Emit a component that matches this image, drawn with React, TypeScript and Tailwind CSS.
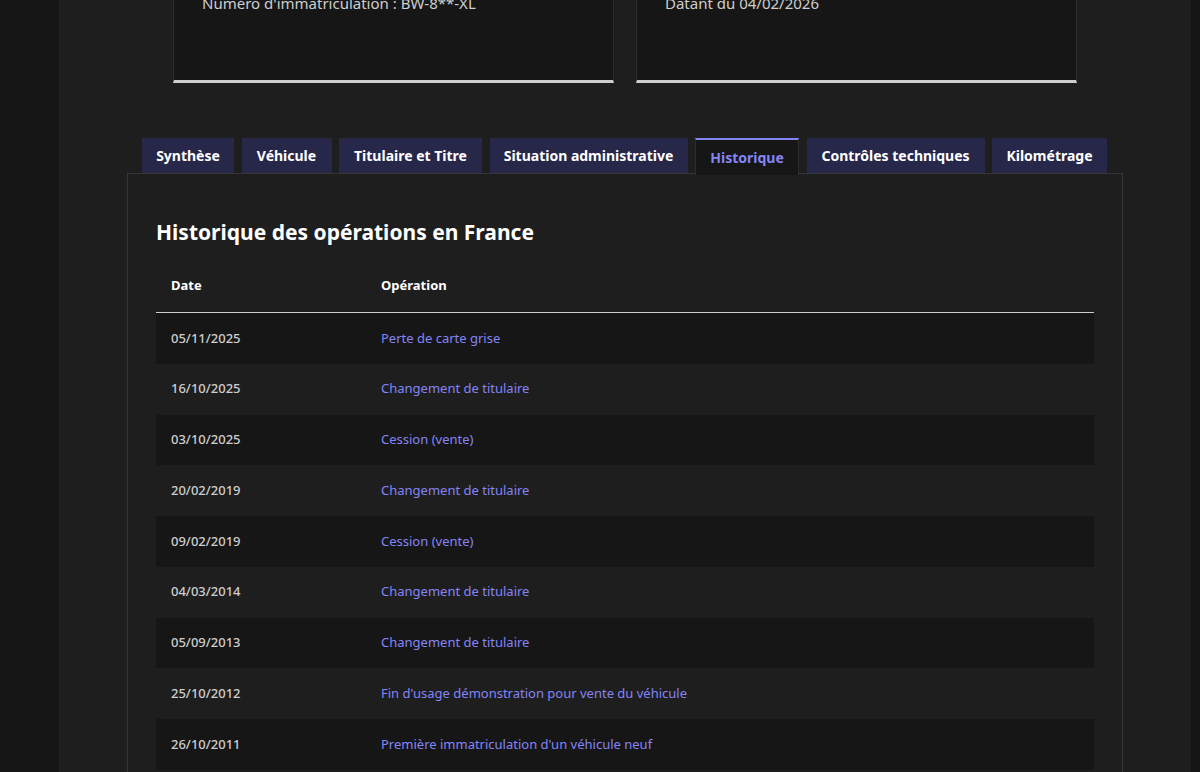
const tabs = [
  { label: 'Synthèse', width: 'w-[92px]' },
  { label: 'Véhicule', width: 'w-[90px]' },
  { label: 'Titulaire et Titre', width: 'w-[143px]' },
  { label: 'Situation administrative', width: 'w-[198px]' },
  { label: 'Historique', width: 'w-[104px]' },
  { label: 'Contrôles techniques', width: 'w-[178px]' },
  { label: 'Kilométrage', width: 'w-[115px]' },
]

const operations = [
  { date: '05/11/2025', label: 'Perte de carte grise' },
  { date: '16/10/2025', label: 'Changement de titulaire' },
  { date: '03/10/2025', label: 'Cession (vente)' },
  { date: '20/02/2019', label: 'Changement de titulaire' },
  { date: '09/02/2019', label: 'Cession (vente)' },
  { date: '04/03/2014', label: 'Changement de titulaire' },
  { date: '05/09/2013', label: 'Changement de titulaire' },
  { date: '25/10/2012', label: "Fin d'usage démonstration pour vente du véhicule" },
  { date: '26/10/2011', label: "Première immatriculation d'un véhicule neuf" },
]

// the page is scrolled: only the last line of each card still shows
function InfoCard({ line }: { line: string }) {
  return (
    <div className="flex h-[143px] flex-col justify-end border border-b-[3px] border-[#2c2c2c] border-b-[#cecece] bg-[#161616] px-7 pb-[65px]">
      <p className="text-[15px] leading-6 text-[#cecece]">{line}</p>
    </div>
  )
}

export default function App() {
  const active = 'Historique'

  return (
    <div
      className="h-[772px] overflow-hidden bg-[#161616]"
      style={{ fontFamily: '"Noto Sans", "Liberation Sans", sans-serif' }}
    >
      <div className="ml-[59px] h-[900px] w-[1132px] bg-[#1e1e1e]">
        <div className="-mt-[60px] grid grid-cols-2 gap-[22px] px-[114px]">
          <InfoCard line="Numéro d'immatriculation : BW-8**-XL" />
          <InfoCard line="Datant du 04/02/2026" />
        </div>

        <div className="mt-[55px] px-[68px]">
          <div className="flex gap-[7.5px] px-[15px]">
            {tabs.map((tab) =>
              tab.label === active ? (
                <div
                  key={tab.label}
                  className={`relative z-10 flex h-[37px] shrink-0 justify-center whitespace-nowrap border-x border-t-2 border-x-[#2c2c2c] border-t-[#8585f6] bg-[#161616] pt-[7px] text-[14px] font-bold text-[#8585f6] ${tab.width}`}
                >
                  {tab.label}
                </div>
              ) : (
                <div
                  key={tab.label}
                  className={`flex h-[35px] shrink-0 items-center justify-center whitespace-nowrap bg-[#27274a] text-[14px] font-bold text-white ${tab.width}`}
                >
                  {tab.label}
                </div>
              )
            )}
          </div>

          <div className="-mt-[2px] h-[640px] border border-[#353535] bg-[#1e1e1e] px-7 pt-[44px]">
            <h2 className="text-[21px] font-bold leading-7 text-white">
              Historique des opérations en France
            </h2>

            <div className="mt-[13px]">
              <div className="grid h-[54px] grid-cols-[225px_1fr] items-center border-b border-[#cecece] text-[13px] font-bold text-white">
                <div className="pl-[15px]">Date</div>
                <div>Opération</div>
              </div>
              {operations.map((op, i) => (
                <div
                  key={op.date + op.label}
                  className={`grid h-[50.75px] grid-cols-[225px_1fr] items-center text-[13px] ${
                    i % 2 === 0 ? 'bg-[#161616]' : 'bg-[#1e1e1e]'
                  }`}
                >
                  <div className="pl-[15px] font-medium text-[#cecece]">{op.date}</div>
                  <div className="text-[#8585f6]">{op.label}</div>
                </div>
              ))}
            </div>
          </div>
        </div>
      </div>
    </div>
  )
}
